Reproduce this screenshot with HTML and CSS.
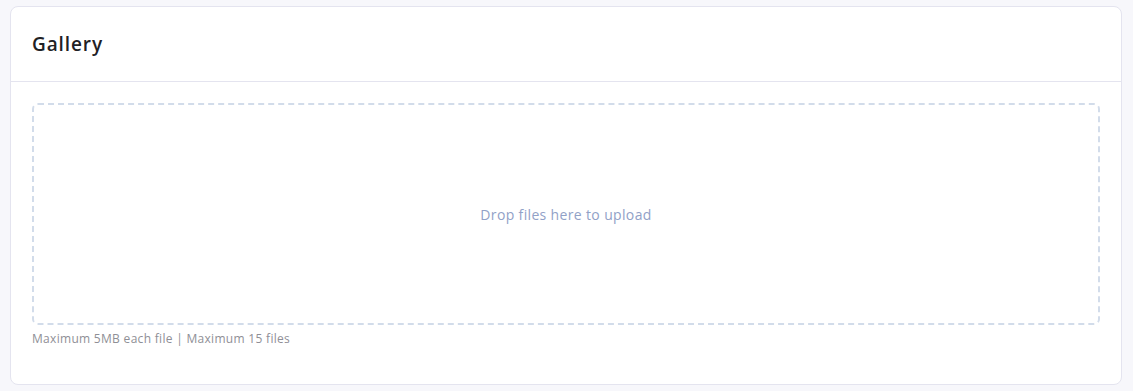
FILE: index.html
```html
<!DOCTYPE html>
<html lang="en">
<head>
  <meta charset="UTF-8" />
  <meta name="viewport" content="width=device-width, initial-scale=1.0" />
  <title>Gallery</title>
  <link rel="stylesheet" href="styles.css">
</head>
<body>
  <div class="card">
    <div class="card-header">
      <h4 class="card-title">Gallery</h4>
    </div>
    <div class="card-body">
      <div class="dropzone">
        <span class="dz-message">Drop files here to upload</span>
      </div>
      <div class="form-hint">Maximum 5MB each file | Maximum 15 files</div>
    </div>
  </div>
</body>
</html>
```
FILE: styles.css
```css
body {
  margin: 0;
  padding: 6px 11px 6px 10px;
  background: #f7f7fb;
  font-family: 'Open Sans', 'Liberation Sans', sans-serif;
}
.card {
  background: #ffffff;
  border: 1px solid #e4e4ef;
  border-radius: 8px;
}
.card-header {
  height: 74px;
  display: flex;
  align-items: center;
  padding: 0 21px;
  border-bottom: 1px solid #e4e4ef;
}
.card-title {
  margin: 0;
  font-size: 19px;
  font-weight: 600;
  color: #1f2125;
  letter-spacing: 0.9px;
}
.card-body {
  padding: 21px 21px 37px;
}
.dropzone {
  height: 218px;
  border: 2px dashed #d2dcea;
  border-radius: 6px;
  display: flex;
  align-items: center;
  justify-content: center;
}
.dz-message {
  font-size: 14px;
  color: #91a1c7;
  letter-spacing: 0.35px;
}
.form-hint {
  margin-top: 5px;
  font-size: 12px;
  color: #8f8f96;
  letter-spacing: 0.3px;
}
```
